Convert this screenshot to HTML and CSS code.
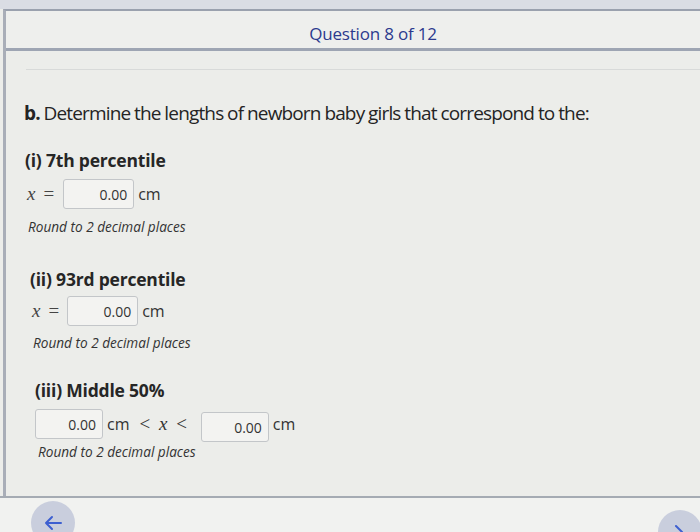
FILE: index.html
```html
<!DOCTYPE html>
<html lang="en">
<head>
<meta charset="utf-8">
<title>Question 8 of 12</title>
<link rel="stylesheet" href="styles.css">
</head>
<body>
<div class="screen">
  <div class="topstrip"></div>
  <div class="frame">
    <header class="qbar"><span class="qtitle">Question 8 of 12</span></header>
    <div class="divider"></div>
    <main class="content">
      <p class="prompt"><b>b.</b> Determine the lengths of newborn baby girls that correspond to the:</p>

      <section class="part p1">
        <h3 class="ptitle">(i) 7th percentile</h3>
        <div class="row">
          <span class="var">x</span><span class="eq">=</span>
          <span class="box">0.00</span><span class="unit">cm</span>
        </div>
        <p class="hint">Round to 2 decimal places</p>
      </section>

      <section class="part p2">
        <h3 class="ptitle">(ii) 93rd percentile</h3>
        <div class="row">
          <span class="var">x</span><span class="eq">=</span>
          <span class="box">0.00</span><span class="unit">cm</span>
        </div>
        <p class="hint">Round to 2 decimal places</p>
      </section>

      <section class="part p3">
        <h3 class="ptitle">(iii) Middle 50%</h3>
        <div class="row">
          <span class="box">0.00</span><span class="unit">cm</span>
          <span class="ineq">&lt; <i class="var">x</i> &lt;</span>
          <span class="box box-b">0.00</span><span class="unit">cm</span>
        </div>
        <p class="hint">Round to 2 decimal places</p>
      </section>
    </main>
  </div>
  <footer class="nav">
    <button class="circle back" type="button" aria-label="Previous">
      <svg width="20" height="16" viewBox="0 0 20 16"><path d="M9 2 L3 8 L9 14 M3 8 H18" fill="none" stroke="#3d5fd0" stroke-width="2" stroke-linecap="round" stroke-linejoin="round"/></svg>
    </button>
    <button class="circle next" type="button" aria-label="Next">
      <svg width="20" height="16" viewBox="0 0 20 16"><path d="M6 2 L12 8" fill="none" stroke="#3d5fd0" stroke-width="2" stroke-linecap="round"/></svg>
    </button>
  </footer>
</div>
</body>
</html>
```
FILE: styles.css
```css
* { box-sizing: border-box; }
html, body { margin: 0; padding: 0; }
body {
  width: 700px;
  height: 532px;
  overflow: hidden;
  background: #eceeea;
  font-family: "Open Sans", "Liberation Sans", sans-serif;
  color: #2b2b2b;
}
.screen {
  width: 700px;
  height: 532px;
  display: flex;
  flex-direction: column;
  background: #ecedea;
}
.topstrip {
  height: 9px;
  background: #dadde4;
  flex: none;
}
.frame {
  flex: none;
  height: 487px;
  margin-left: 3px;
  border-left: 3px solid #a9aeb8;
  border-top: 2px solid #9aa1ae;
  display: flex;
  flex-direction: column;
}
.qbar {
  height: 40px;
  display: flex;
  align-items: center;
  justify-content: center;
  background: #eeefed;
  border-bottom: 3px solid #9ea5b3;
  padding: 8px 0 0 40px;
}
.qtitle {
  font-size: 17px;
  color: #2c3a8e;
  letter-spacing: -0.2px;
}
.divider {
  height: 1px;
  margin: 18px 0 0 20px;
  background: #d8dad9;
}
.content {
  padding: 30px 0 0 18px;
}
.prompt {
  margin: 0;
  font-size: 19px;
  letter-spacing: -0.85px;
  word-spacing: -0.3px;
  line-height: 26px;
  color: #242424;
}
.prompt b { font-weight: 700; }
.part { margin: 0; }
.p1 { margin-top: 22px; padding-left: 1px; }
.p2 { margin-top: 31px; padding-left: 6px; }
.p3 { margin-top: 26px; padding-left: 11px; }
.ptitle {
  margin: 0;
  font-size: 17.5px;
  font-weight: 700;
  line-height: 24px;
  letter-spacing: -0.2px;
  color: #262626;
}
.row {
  display: flex;
  align-items: center;
  height: 32px;
  margin-top: 6px;
}
.p2 .row { margin-top: 4px; }
.var {
  font-family: "Liberation Serif", "DejaVu Serif", serif;
  font-style: italic;
  font-size: 19px;
  color: #444;
  margin-left: 2px;
}
.eq {
  font-family: "Liberation Serif", serif;
  font-size: 19px;
  color: #444;
  margin: 0 9px 0 8px;
}
.p2 .eq { margin-right: 8px; }
.box {
  display: inline-flex;
  align-items: center;
  justify-content: flex-end;
  width: 71px;
  height: 30px;
  padding-right: 6px;
  border: 1.5px solid #c3c6c9;
  border-radius: 3px;
  background: #f3f3f1;
  font-size: 14px;
  color: #333;
}
.unit {
  font-size: 16px;
  margin-left: 4px;
  color: #333;
}
.ineq {
  font-family: "Liberation Serif", serif;
  font-size: 19px;
  color: #333;
  margin: 0 14px 0 10px;
  word-spacing: 4px;
}
.ineq .var { font-size: 19px; color: #333; margin-left: 0; }
.p3 .box { width: 68px; }
.box-b { margin-top: 6px; }
.hint {
  margin: 8px 0 0 3px;
  font-size: 13.6px;
  font-style: italic;
  color: #333;
  line-height: 18px;
}
.p2 .hint { margin-top: 7px; }
.p3 .hint { margin-top: 3px; }
.nav {
  flex: 1;
  position: relative;
  border-top: 2px solid #a5abb3;
  background: #f1f2f0;
}
.circle {
  position: absolute;
  width: 44px;
  height: 44px;
  border-radius: 50%;
  border: none;
  background: #c9cedd;
  display: flex;
  align-items: center;
  justify-content: center;
  padding: 0;
}
.back { left: 31px; top: 3px; }
.next { left: 658px; top: 12px; }
```
